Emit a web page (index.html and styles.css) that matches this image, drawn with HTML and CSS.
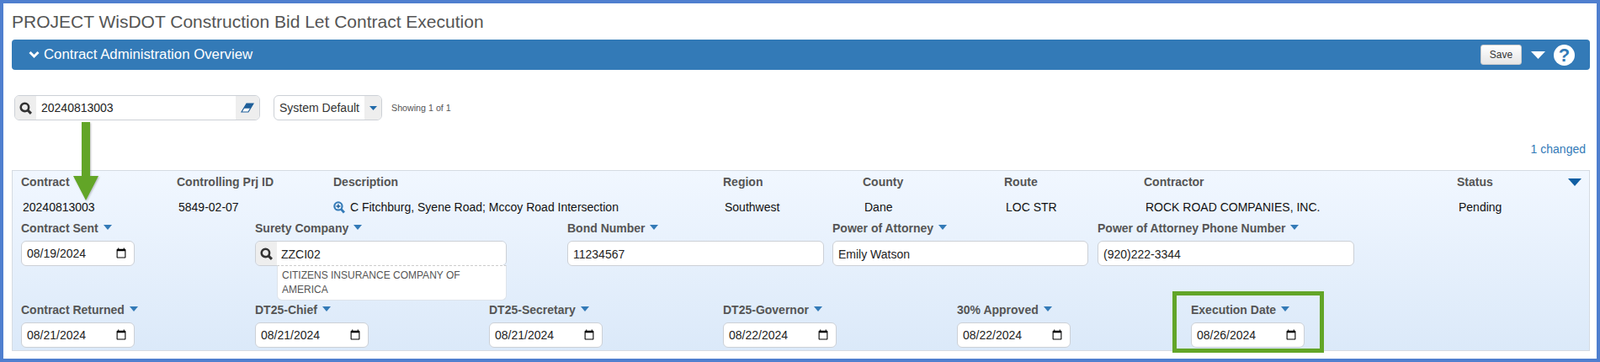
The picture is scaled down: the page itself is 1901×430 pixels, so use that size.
FILE: index.html
```html
<!DOCTYPE html>
<html lang="en">
<head>
  <meta charset="UTF-8" />
  <title>Contract Administration Overview</title>
  <link rel="stylesheet" href="styles.css">
</head>
<body>
  <div class="frame">
    <h1 class="page-title">PROJECT WisDOT Construction Bid Let Contract Execution</h1>

    <!-- Blue section bar -->
    <div class="section-bar">
      <div class="section-title">
        <svg class="chevron" width="13" height="10" viewBox="0 0 13 10"><path d="M1.5 2 L6.5 7 L11.5 2" fill="none" stroke="#fff" stroke-width="3"/></svg>
        Contract Administration Overview
      </div>
      <div class="section-actions">
        <button class="save-btn">Save</button>
        <svg width="17" height="9" viewBox="0 0 17 9"><path d="M0 0 H17 L8.5 9 Z" fill="#fff"/></svg>
        <span class="help-btn">?</span>
      </div>
    </div>

    <!-- Search row -->
    <div class="search-row">
      <div class="search-box">
        <span class="addon">
          <svg class="mag" width="15" height="15" viewBox="0 0 14 14"><circle cx="6" cy="6" r="4.4" fill="none" stroke="#333" stroke-width="2.4"/><path d="M9 9 L13 13" stroke="#333" stroke-width="2.8"/></svg>
        </span>
        <input class="search-input" type="text" value="20240813003">
        <span class="addon addon-end">
          <svg width="16" height="13" viewBox="0 0 16 13"><path d="M7 1 H15 L9 11 H1 Z" fill="#fff" stroke="#1f5f99" stroke-width="1.2"/><path d="M7 1 H15 L11.6 6.8 H3.6 Z" fill="#1f5f99"/></svg>
        </span>
      </div>
      <div class="layout-select">
        <span class="layout-name">System Default</span>
        <span class="layout-btn"><svg width="9" height="5" viewBox="0 0 9 5"><path d="M0 0 H9 L4.5 5 Z" fill="#1f69a8"/></svg></span>
      </div>
      <span class="showing">Showing 1 of 1</span>
    </div>

    <div class="changed-row"><a class="changed">1 changed</a></div>

    <!-- Contract panel -->
    <div class="panel">
      <div class="summary-grid">
        <div class="head">Contract</div>
        <div class="head">Controlling Prj ID</div>
        <div class="head">Description</div>
        <div class="head">Region</div>
        <div class="head">County</div>
        <div class="head">Route</div>
        <div class="head">Contractor</div>
        <div class="head head-last">Status
          <svg width="16" height="9" viewBox="0 0 16 9"><path d="M0 0 H16 L8 9 Z" fill="#0f5ea3"/></svg>
        </div>
        <div class="val">20240813003</div>
        <div class="val">5849-02-07</div>
        <div class="val val-desc">
          <svg width="14" height="15" viewBox="0 0 13 14"><circle cx="5.5" cy="5.5" r="4.3" fill="none" stroke="#337ab7" stroke-width="2"/><path d="M3.2 5.5 H7.8 M5.5 3.2 V7.8" stroke="#1f5f99" stroke-width="1.4"/><path d="M8.6 8.8 L12 12.6" stroke="#337ab7" stroke-width="2.6"/></svg>
          C Fitchburg, Syene Road; Mccoy Road Intersection
        </div>
        <div class="val">Southwest</div>
        <div class="val">Dane</div>
        <div class="val">LOC STR</div>
        <div class="val">ROCK ROAD COMPANIES, INC.</div>
        <div class="val">Pending</div>
      </div>

      <div class="row-top">
        <div class="field f-sent">
          <label>Contract Sent <i class="caret"></i></label>
          <input class="ctl date" type="date" value="2024-08-19">
        </div>
        <div class="field f-surety">
          <label>Surety Company <i class="caret"></i></label>
          <div class="lookup">
            <span class="addon">
              <svg class="mag" width="15" height="15" viewBox="0 0 14 14"><circle cx="6" cy="6" r="4.4" fill="none" stroke="#333" stroke-width="2.4"/><path d="M9 9 L13 13" stroke="#333" stroke-width="2.8"/></svg>
            </span>
            <input class="search-input" type="text" value="ZZCI02">
          </div>
          <div class="lookup-desc">CITIZENS INSURANCE COMPANY OF AMERICA</div>
        </div>
        <div class="field f-bond">
          <label>Bond Number <i class="caret"></i></label>
          <input class="ctl wide" type="text" value="11234567">
        </div>
        <div class="field f-poa">
          <label>Power of Attorney <i class="caret"></i></label>
          <input class="ctl wide" type="text" value="Emily Watson">
        </div>
        <div class="field f-phone">
          <label>Power of Attorney Phone Number <i class="caret"></i></label>
          <input class="ctl wide" type="text" value="(920)222-3344">
        </div>
      </div>

      <div class="row-dates">
        <div class="field">
          <label>Contract Returned <i class="caret"></i></label>
          <input class="ctl date" type="date" value="2024-08-21">
        </div>
        <div class="field">
          <label>DT25-Chief <i class="caret"></i></label>
          <input class="ctl date" type="date" value="2024-08-21">
        </div>
        <div class="field">
          <label>DT25-Secretary <i class="caret"></i></label>
          <input class="ctl date" type="date" value="2024-08-21">
        </div>
        <div class="field">
          <label>DT25-Governor <i class="caret"></i></label>
          <input class="ctl date" type="date" value="2024-08-22">
        </div>
        <div class="field">
          <label>30% Approved <i class="caret"></i></label>
          <input class="ctl date" type="date" value="2024-08-22">
        </div>
        <div class="field f-exec">
          <label>Execution Date <i class="caret"></i></label>
          <input class="ctl date" type="date" value="2024-08-26">
          <div class="callout-box"></div>
        </div>
      </div>
    </div>

    <!-- Green annotation arrow -->
    <svg class="callout-arrow" width="34" height="96" viewBox="0 0 34 96"><path d="M12 0 H22 V64 H32 L17 93 L2 64 H12 Z" fill="#62a527"/></svg>
  </div>
</body>
</html>
```

FILE: styles.css
```css
* {
  box-sizing: border-box;
}

body {
  margin: 0;
  font-family: "Liberation Sans", Arial, sans-serif;
  font-size: 14px;
  color: #333;
  background: #fff;
}

.frame {
  position: relative;
  height: 430px;
  border: 4px solid #4f7fcf;
  padding: 0 8px 0 10px;
  overflow: hidden;
}

.page-title {
  margin: 7px 0 6px;
  font-size: 21px;
  line-height: 30px;
  font-weight: normal;
  color: #555;
}

/* Section bar */
.section-bar {
  display: flex;
  justify-content: space-between;
  align-items: center;
  height: 36px;
  padding: 0 6px 0 20px;
  background: #337ab7;
  border-radius: 4px;
}
.section-title {
  display: flex;
  align-items: center;
  gap: 5px;
  font-size: 16.8px;
  color: #fff;
}
.section-actions {
  display: flex;
  align-items: center;
  gap: 11px;
  margin-right: 12px;
}
.save-btn {
  width: 49px;
  height: 24px;
  padding: 0;
  font-family: inherit;
  font-size: 12px;
  color: #333;
  background: linear-gradient(180deg, #fff, #e6e6e6);
  border: 1px solid #ccc;
  border-radius: 3px;
}
.help-btn {
  width: 25px;
  height: 25px;
  border-radius: 50%;
  background: #fff;
  color: #337ab7;
  font-size: 22px;
  font-weight: bold;
  line-height: 25px;
  text-align: center;
  margin-left: -1px;
}

/* Search row */
.search-row {
  display: flex;
  align-items: center;
  margin: 30px 0 0 3px;
  height: 30px;
}
.search-box {
  display: flex;
  width: 292px;
  height: 30px;
  border: 1px solid #ccd0d6;
  border-radius: 6px;
  overflow: hidden;
}
.addon {
  display: flex;
  align-items: center;
  justify-content: center;
  flex: 0 0 25px;
  background: #eee;
}
.addon-end {
  flex-basis: 28px;
}
.search-input {
  flex: 1;
  min-width: 0;
  padding: 0 6px;
  border: 0;
  outline: 0;
  font-family: inherit;
  font-size: 14px;
  color: #222;
  background: #fff;
}
.layout-select {
  display: flex;
  width: 129px;
  height: 30px;
  margin-left: 16px;
  border: 1px solid #ccd0d6;
  border-radius: 6px;
  overflow: hidden;
  background: #fff;
}
.layout-name {
  flex: 1;
  padding-left: 6px;
  line-height: 28px;
}
.layout-btn {
  display: flex;
  align-items: center;
  justify-content: center;
  flex: 0 0 20px;
  background: #eee;
}
.showing {
  margin-left: 11px;
  font-size: 10.7px;
  color: #555;
}

.changed-row {
  margin-top: 24px;
  height: 20px;
  line-height: 20px;
  text-align: right;
  padding-right: 5px;
}
.changed {
  color: #337ab7;
}

/* Contract panel */
.panel {
  height: 215px;
  margin-top: 15px;
  padding: 3px 9px 0 10px;
  border: 1px solid #d5dbe2;
  background: linear-gradient(180deg, #f1f7ff, #dbe9f9);
}
.summary-grid {
  display: grid;
  grid-template-columns: 185px 186px 463px 166px 168px 166px 372px 1fr;
  grid-auto-rows: 20px;
  row-gap: 10px;
}
.head {
  font-weight: bold;
  color: #555;
  line-height: 20px;
}
.head-last {
  display: flex;
  justify-content: space-between;
  align-items: center;
}
.val {
  padding-left: 2px;
  line-height: 20px;
  color: #111;
}
.val-desc svg {
  vertical-align: -3px;
  margin: 0 2px 0 -2px;
}

label {
  display: block;
  height: 20px;
  line-height: 20px;
  font-weight: bold;
  color: #555;
}
.caret {
  display: inline-block;
  width: 0;
  height: 0;
  margin-left: 2px;
  border-style: solid;
  border-width: 6px 5.5px 0;
  border-color: #337ab7 transparent transparent;
  vertical-align: 3px;
}
.ctl {
  display: block;
  height: 30px;
  margin-top: 5px;
  padding: 0 6px;
  border: 1px solid #ccd0d6;
  border-radius: 6px;
  outline: 0;
  background: #fff;
  font-family: inherit;
  font-size: 14px;
  color: #222;
}
.date {
  width: 135px;
}
.date::-webkit-datetime-edit-month-field,
.date::-webkit-datetime-edit-day-field,
.date::-webkit-datetime-edit-year-field {
  padding: 0;
}
.wide {
  width: 100%;
  padding-top: 2px;
}

.row-top {
  display: flex;
  height: 95px;
  margin-top: 5px;
}
.f-sent { flex: 0 0 278px; }
.f-surety { flex: 0 0 371px; }
.f-bond { flex: 0 0 315px; padding-right: 10px; }
.f-poa { flex: 0 0 315px; padding-right: 11px; }
.f-phone { flex: 0 0 305px; }

.lookup {
  display: flex;
  width: 299px;
  height: 30px;
  margin-top: 5px;
  border: 1px solid #ccd0d6;
  border-radius: 6px;
  overflow: hidden;
}
.lookup .search-input {
  padding: 2px 5px 0;
}
.lookup-desc {
  width: 273px;
  margin: -1px 0 0 26px;
  padding: 3px 5px;
  border: 1px solid #dde3ea;
  border-top: 1px dashed #ccc;
  border-radius: 0 0 6px 6px;
  background: #fff;
  font-size: 12px;
  line-height: 17px;
  color: #555;
}

.row-dates {
  display: grid;
  grid-template-columns: repeat(6, 278px);
  margin-top: 2px;
}
.f-exec {
  position: relative;
}

/* Green annotations sit on top of the form */
.callout-box {
  position: absolute;
  top: -12px;
  left: -22px;
  width: 180px;
  height: 73px;
  border: 5px solid #62a527;
}
.callout-arrow {
  position: absolute;
  left: 81px;
  top: 141px;
  filter: drop-shadow(1px 1px 1px rgba(0, 0, 0, 0.25));
}
```
